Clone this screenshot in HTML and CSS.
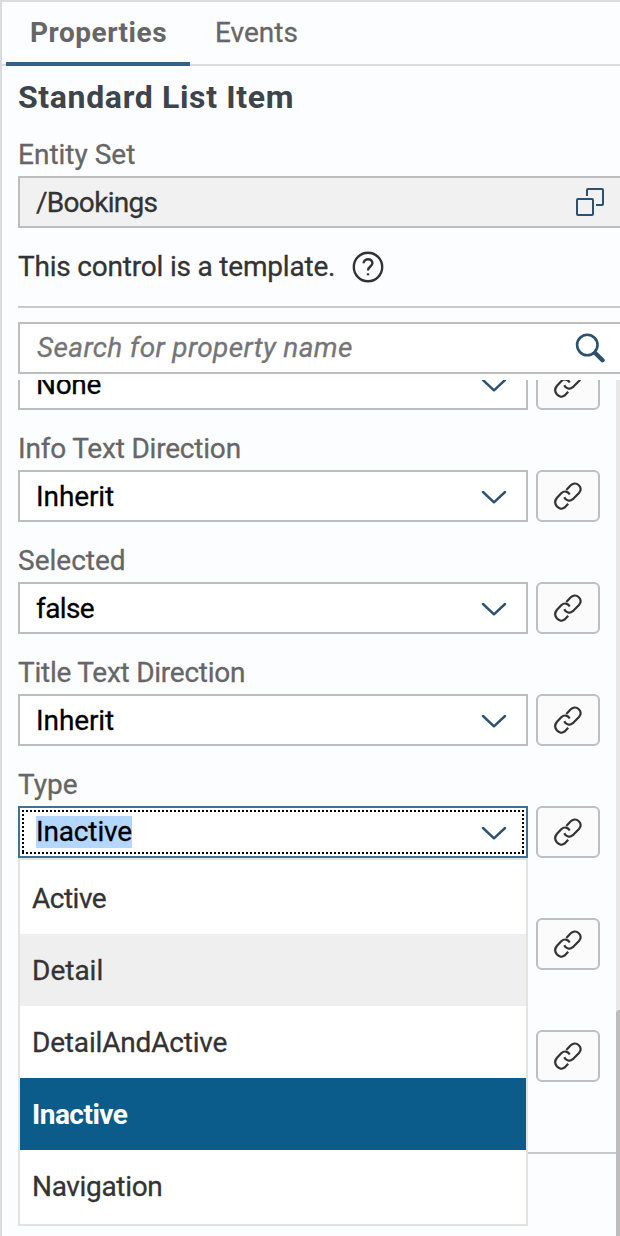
FILE: index.html
```html
<!DOCTYPE html>
<html lang="en">
<head>
<meta charset="utf-8">
<title>Properties</title>
<link rel="stylesheet" href="styles.css">
</head>
<body>
<svg class="defs" aria-hidden="true">
  <symbol id="chevron" viewBox="0 0 26 14"><path d="M2 2 L13 12.3 L24 2"/></symbol>
  <symbol id="link" viewBox="0 0 28 28">
    <path d="M12.3 8 L16.8 3.3 C22 -1.6 30.2 5.4 25 11 L18.8 17.2 C15.8 19.8 11.8 18.8 10.3 15.3"/>
    <path d="M15.7 12.5 C14 9.2 10 8.4 7.2 11.3 L3 15.8 C-2 22 5.4 29.8 11 25.2 L14.2 21.8"/>
  </symbol>
</svg>
<main class="panel">
  <nav class="tabs">
    <a class="tab tab-active"><span class="t-properties">Properties</span></a>
    <a class="tab"><span class="t-events">Events</span></a>
  </nav>
  <header class="head">
    <h1 class="title">Standard List Item</h1>
    <div class="label">Entity Set</div>
    <div class="input readonly"><span class="t-bookings">/Bookings</span>
      <svg class="icon-copy" viewBox="0 0 28 28"><rect x="1" y="11" width="16" height="16" rx="1"/><path d="M11 8V2Q11 1 12 1H26Q27 1 27 2V16Q27 17 26 17H20"/></svg>
    </div>
    <div class="note"><span class="t-note">This control is a template.</span>
      <svg class="icon-help" viewBox="0 0 32 32"><circle cx="16" cy="16" r="14.2"/><path d="M11.6 12.2C11.8 6.8 20.6 7 20.4 12.2C20.3 15.3 16 15.8 16 19.4"/><path d="M16 22.3V24.3"/></svg>
    </div>
    <div class="input search"><span class="t-search">Search for property name</span>
      <svg class="icon-search" viewBox="0 0 30 30"><circle cx="12.3" cy="12" r="10.2"/><path d="M20.2 20 L27.5 27.2"/></svg>
    </div>
  </header>
  <section class="scroller">
    <div class="fields">
      <div class="field">
        <div class="row"><div class="input"><span class="t-none">None</span><svg class="chev"><use href="#chevron"/></svg></div><button class="bind"><svg><use href="#link"/></svg></button></div>
      </div>
      <div class="field">
        <div class="label t-info">Info Text Direction</div>
        <div class="row"><div class="input"><span class="t-inherit">Inherit</span><svg class="chev"><use href="#chevron"/></svg></div><button class="bind"><svg><use href="#link"/></svg></button></div>
      </div>
      <div class="field">
        <div class="label">Selected</div>
        <div class="row"><div class="input"><span class="t-false">false</span><svg class="chev"><use href="#chevron"/></svg></div><button class="bind"><svg><use href="#link"/></svg></button></div>
      </div>
      <div class="field">
        <div class="label t-titledir">Title Text Direction</div>
        <div class="row"><div class="input"><span class="t-inherit">Inherit</span><svg class="chev"><use href="#chevron"/></svg></div><button class="bind"><svg><use href="#link"/></svg></button></div>
      </div>
      <div class="field">
        <div class="label">Type</div>
        <div class="row"><div class="input focused"><span class="selection">Inactive</span><svg class="chev"><use href="#chevron"/></svg></div><button class="bind"><svg><use href="#link"/></svg></button>
          <ul class="menu">
            <li><span class="t-active">Active</span></li>
            <li class="hover">Detail</li>
            <li><span class="t-daa">DetailAndActive</span></li>
            <li class="chosen"><span class="t-chosen">Inactive</span></li>
            <li><span class="t-nav">Navigation</span></li>
          </ul>
        </div>
      </div>
      <div class="field covered"><div class="row"><button class="bind"><svg><use href="#link"/></svg></button></div></div>
      <div class="field covered"><div class="row"><button class="bind"><svg><use href="#link"/></svg></button></div></div>
      <hr class="end">
    </div>
    <div class="track"><div class="thumb"></div></div>
  </section>
</main>
</body>
</html>
```

FILE: styles.css
```css
* { box-sizing: border-box; }
body {
  margin: 0;
  font: 28px/36px Roboto, "Liberation Sans", sans-serif;
  color: #333;
  background: #fcfdfe;
  -webkit-text-stroke: 0.3px;
}
.defs { display: none; }
svg { fill: none; flex: none; }
.panel {
  width: 620px;
  height: 1236px;
  border: solid #dbdcdf;
  border-width: 2px 0 0 2px;
  overflow: hidden;
  display: flex;
  flex-direction: column;
}
.tabs {
  height: 64px;
  flex: none;
  display: flex;
  padding-left: 4px;
  border-bottom: 2px solid #dbdcdf;
  color: #666;
}
.tab { height: 64px; padding: 13px 25px 0; white-space: nowrap; }
.tab-active { width: 184px; padding: 13px 24px 0; font-weight: 700; border-bottom: 4px solid #336286; -webkit-text-stroke: 0; }
.t-properties { letter-spacing: 0.52px; }
.head { padding-left: 16px; height: 314px; flex: none; }
.title { margin: 13px 0 0; font-size: 32px; line-height: 36px; font-weight: 700; color: #3d444a; white-space: nowrap; letter-spacing: 0.65px; -webkit-text-stroke: 0; }
.label { color: #666; height: 36px; line-height: 30px; white-space: nowrap; }
.head .label { margin: 22px 0 3px; line-height: 36px; }
.input {
  height: 52px;
  border: 2px solid #bdbdbd;
  background: #fff;
  padding: 2px 19px 0 16px;
  display: flex;
  align-items: center;
  justify-content: space-between;
  white-space: nowrap;
  color: #000;
}
.readonly, .search { border-right: 0; }
.readonly { background: #f1f1f1; color: #333; padding-right: 16px; }
.search { color: #757575; font-style: italic; padding: 0 15px 0 17px; }
.icon-copy { width: 28px; height: 28px; margin-top: -2px; stroke: #2b5070; stroke-width: 2; }
.icon-help { width: 32px; height: 32px; stroke: #333; stroke-width: 2.4; }
.icon-search { width: 30px; height: 30px; stroke: #2b5070; stroke-width: 2.6; stroke-linecap: round; }
.icon-search path { stroke-width: 4.4; }
.t-bookings { letter-spacing: -0.7px; }
.t-note { letter-spacing: -0.2px; }
.t-search { letter-spacing: 0.36px; }
.t-none { letter-spacing: -0.3px; }
.t-info { letter-spacing: -0.2px; }
.t-titledir { letter-spacing: -0.25px; }
.t-inherit { letter-spacing: -0.1px; }
.t-false { letter-spacing: -0.6px; }
.t-active { letter-spacing: -0.5px; }
.t-daa { letter-spacing: -0.18px; }
.t-chosen { letter-spacing: -0.5px; }
.t-nav { letter-spacing: -0.33px; }
.note { height: 80px; margin-bottom: 14px; border-bottom: 2px solid #cacaca; display: flex; align-items: center; gap: 17px; }
.scroller { flex: 1; min-height: 0; overflow: hidden; display: flex; }
.fields { flex: 1; margin-top: -22px; }
.field { padding: 0 16px; margin-bottom: 24px; }
.row { position: relative; display: flex; gap: 8px; justify-content: flex-end; }
.row .input { flex: 1; }
.chev { width: 26px; height: 14px; stroke: #2b5070; stroke-width: 2.4; stroke-linecap: round; stroke-linejoin: round; }
.bind {
  width: 64px;
  height: 52px;
  border: 2px solid #bdbfbf;
  border-radius: 6px;
  background: #fafbfa;
  padding: 0;
  display: grid;
  place-items: center;
}
.bind svg { width: 28px; height: 28px; stroke: #333; stroke-width: 2.2; }
.covered { padding-top: 36px; }
.input.focused {
  border-color: #427094;
  background:
    repeating-linear-gradient(90deg, #000 0 2px, transparent 2px 4px) 2px 2px / 502px 2px no-repeat,
    repeating-linear-gradient(90deg, #000 0 2px, transparent 2px 4px) 2px 44px / 502px 2px no-repeat,
    repeating-linear-gradient(#000 0 2px, transparent 2px 4px) 2px 2px / 2px 44px no-repeat,
    repeating-linear-gradient(#000 0 2px, transparent 2px 4px) 502px 2px / 2px 44px no-repeat,
    #fff;
}
.selection { background: #b3d7ff; height: 32px; line-height: 32px; margin-top: -2px; letter-spacing: -0.15px; }
.menu {
  position: absolute;
  z-index: 1;
  top: 52px;
  left: 0;
  width: 510px;
  height: 368px;
  margin: 0;
  padding: 2px 0;
  border: 2px solid #e3e4df;
  background: #fff;
  list-style: none;
  color: #333;
}
.menu li { height: 72px; padding: 19px 12px 17px; white-space: nowrap; }
.menu .hover { background: #efefef; }
.menu .chosen { background: #0b5c8b; color: #fff; font-weight: 700; -webkit-text-stroke: 0; }
.end { margin: 70px 0 0 16px; border: 0; height: 2px; background: #c8c9cb; }
.track { width: 4px; background: #e8e8e8; padding-top: 630px; }
.thumb { height: 226px; background: #bdbdbd; border-radius: 3px 0 0 0; }
```
